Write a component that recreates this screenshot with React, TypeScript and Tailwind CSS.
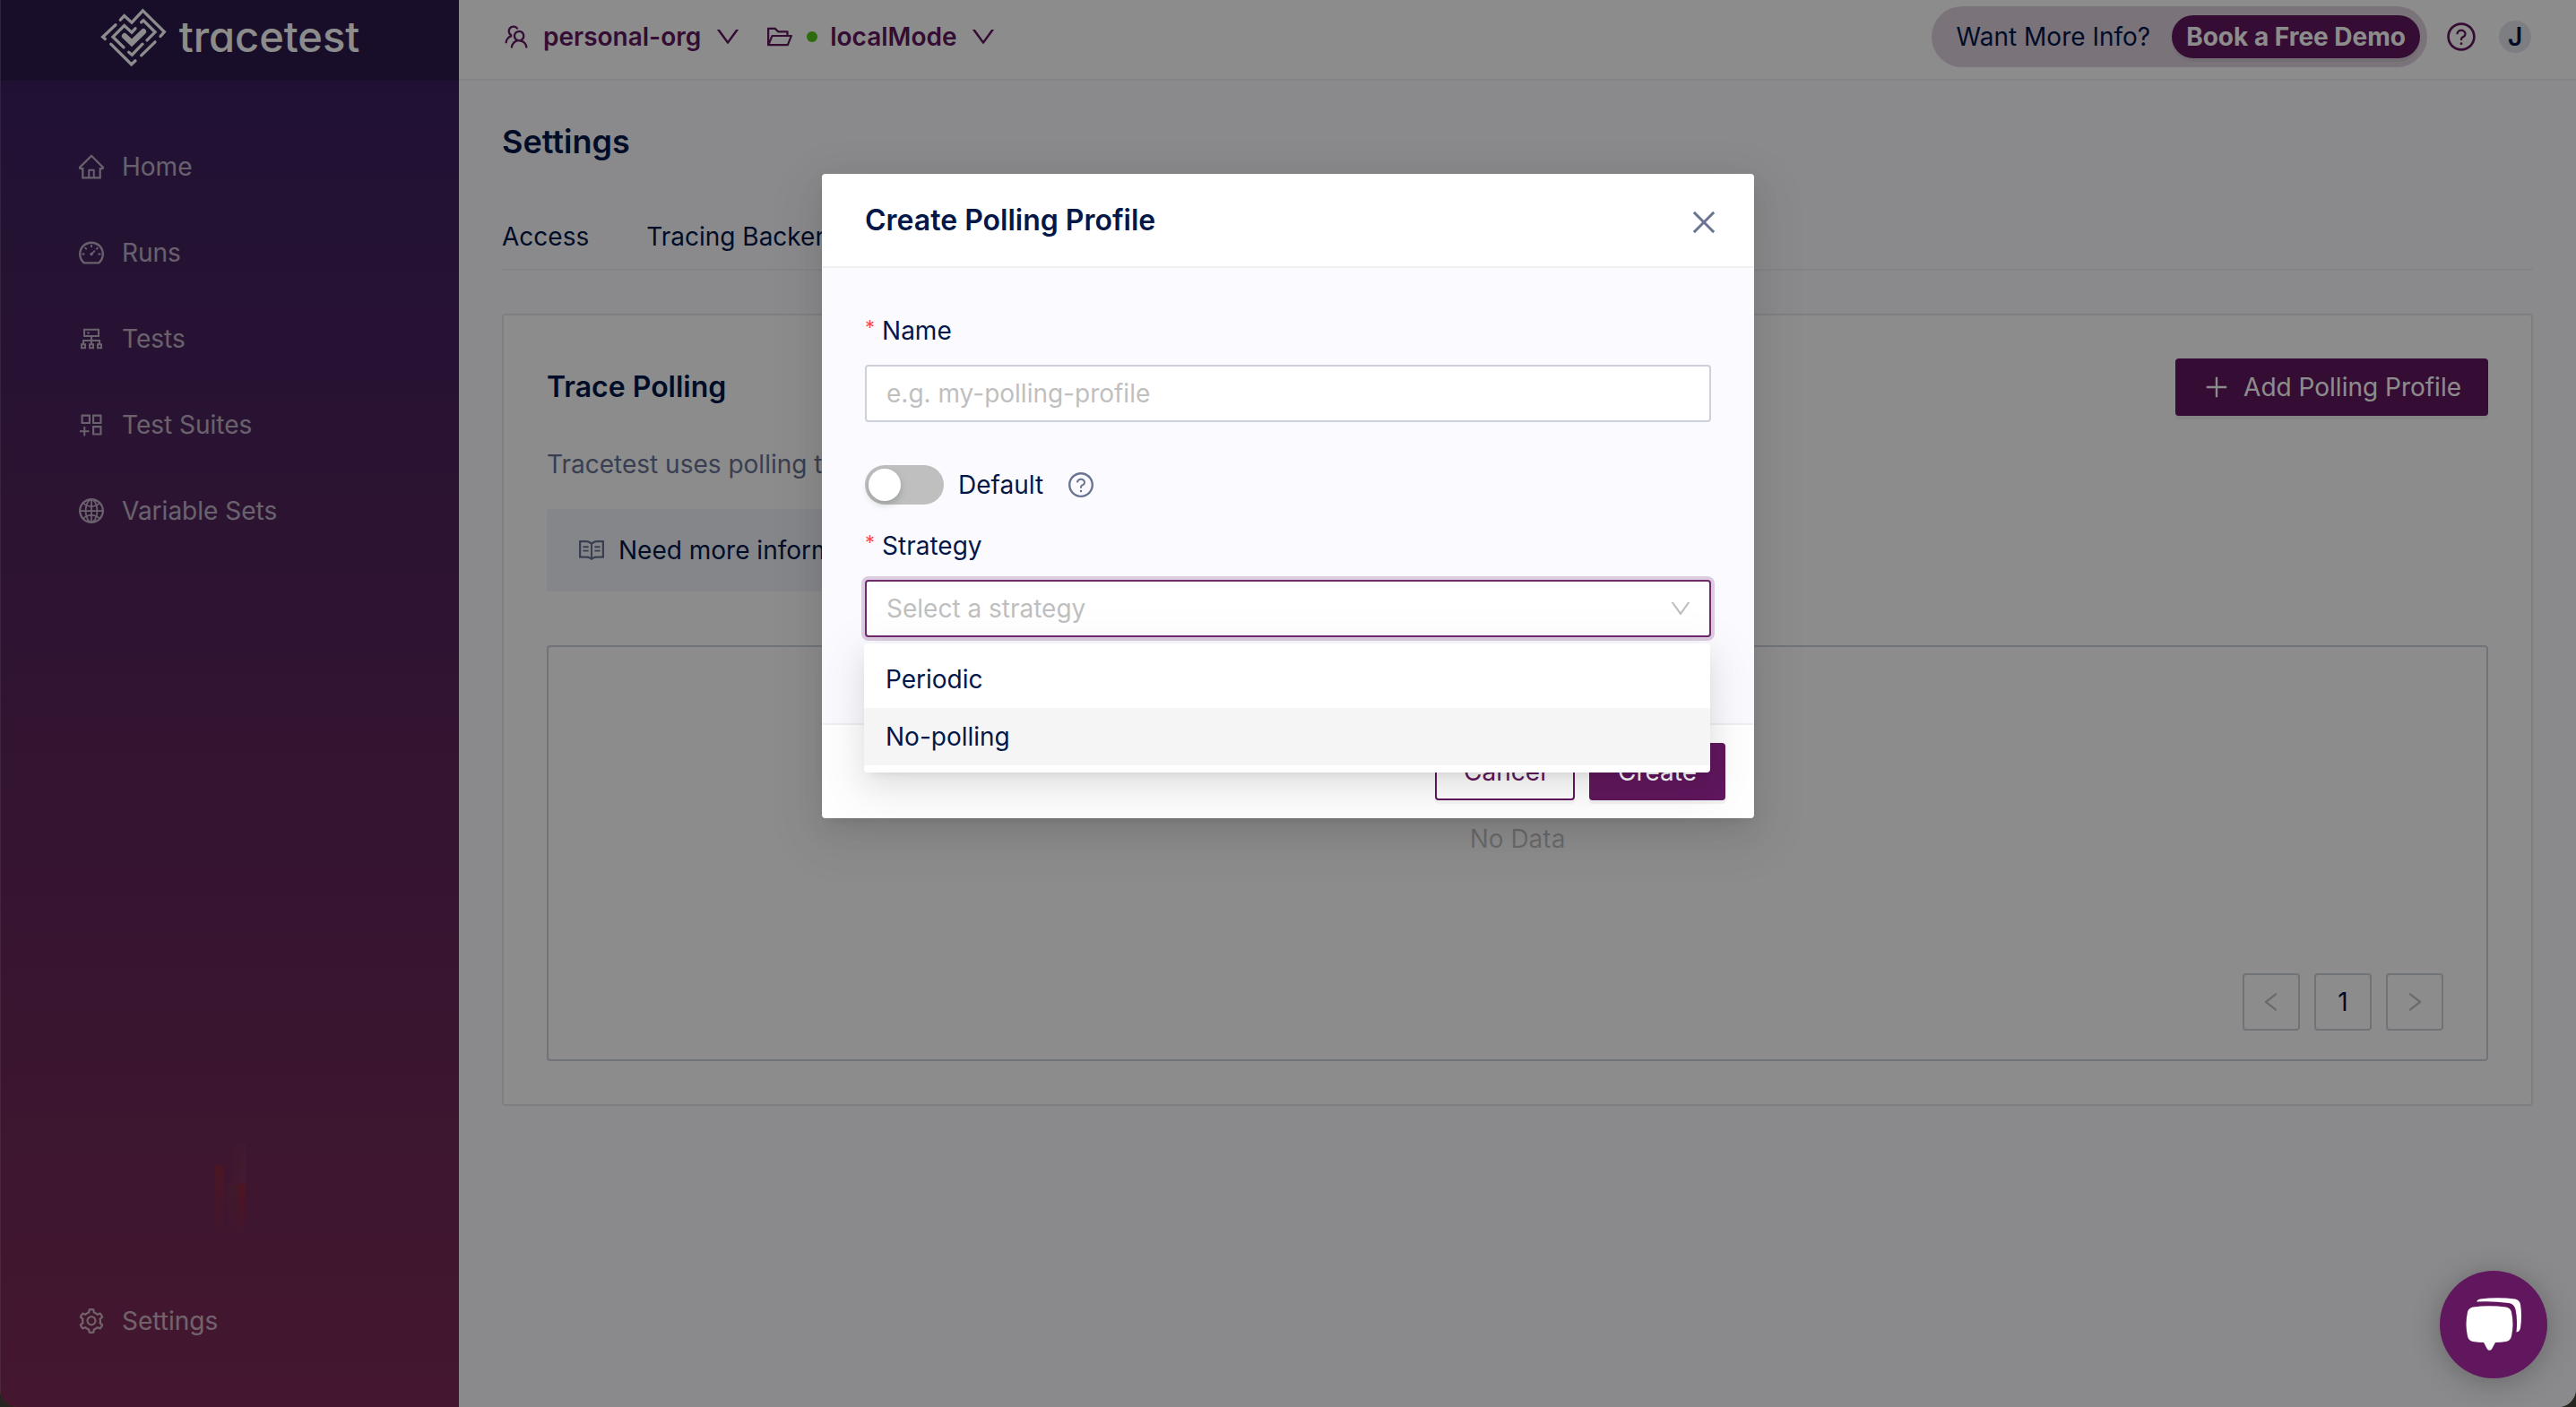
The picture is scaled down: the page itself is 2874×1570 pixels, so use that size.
import React from "react";
import {
  AiOutlineHome,
  AiOutlineDashboard,
  AiOutlineCluster,
  AiOutlineAppstoreAdd,
  AiOutlineGlobal,
  AiOutlineSetting,
  AiOutlineTeam,
  AiOutlineFolderOpen,
  AiOutlineDown,
  AiOutlineQuestionCircle,
  AiOutlineRead,
  AiOutlineLeft,
  AiOutlineRight,
  AiOutlineClose,
  AiOutlinePlus,
} from "react-icons/ai";

const navItems = [
  { label: "Home", Icon: AiOutlineHome },
  { label: "Runs", Icon: AiOutlineDashboard },
  { label: "Tests", Icon: AiOutlineCluster },
  { label: "Test Suites", Icon: AiOutlineAppstoreAdd },
  { label: "Variable Sets", Icon: AiOutlineGlobal },
];

const tabs = ["Access", "Tracing Backend", "Trace Polling", "Analyzer", "Test Runner", "Demo"];

function LogoMark() {
  return (
    <svg
      viewBox="30 22 222 200"
      className="h-[67px] w-[74px]"
      fill="none"
      stroke="white"
      strokeWidth="10"
      strokeLinecap="round"
      strokeLinejoin="miter"
      aria-hidden="true"
    >
      <path d="M97 64 L110 50 L135 73 L172 33 L244 104 L231 119" />
      <path d="M81 81 L38 121 L46 128" />
      <path d="M65 145 L134 213 L147 201" />
      <path d="M213 138 L167 183" />
      <path d="M108 156 L72 121 L110 83 L135 106 L147 93" />
      <path d="M167 72 L174 66 L213 105 L186 132" />
      <path d="M171 145 L136 181 L125 172" />
      <path d="M111 118 L135 141 L174 103" strokeWidth="19" />
    </svg>
  );
}

function SidebarGlow() {
  return (
    <div aria-hidden="true" className="flex h-[104px] items-end justify-center gap-1">
      <div className="h-20 w-[10px] bg-linear-to-b from-[#a02a2a]/50 to-transparent" />
      <div className="flex h-[103px] w-5 flex-col">
        <div className="h-11 bg-linear-to-r from-transparent to-[#a05050]/20" />
        <div className="flex flex-1">
          <div className="w-3 bg-linear-to-b from-[#8a4a2a]/20 to-transparent" />
          <div className="flex-1 bg-linear-to-b from-[#b02222]/50 to-transparent" />
        </div>
      </div>
    </div>
  );
}

function NavLink({ label, Icon }: { label: string; Icon: React.ComponentType<{ className?: string }> }) {
  return (
    <a href="#" className="flex h-20 items-center gap-[18px] pl-[85px] text-white/65">
      <Icon className="size-8" />
      {label}
    </a>
  );
}

function Sidebar() {
  return (
    <aside className="flex w-[512px] shrink-0 flex-col border-l border-white/15 bg-linear-[180deg,#2f1e61_-11%,#8b2c53_120%]">
      <div className="flex h-[90px] items-center justify-center gap-[14px] bg-[#2c1b4e] pb-2">
        <LogoMark />
        <span className="text-[47px] leading-[56px] font-medium text-white [font-feature-settings:'cv11']">tracetest</span>
      </div>
      <nav className="flex flex-col gap-4 pt-14">
        {navItems.map((item) => (
          <NavLink key={item.label} {...item} />
        ))}
      </nav>
      <div className="mt-auto pb-14">
        <SidebarGlow />
        <div className="pt-[54px]">
          <NavLink label="Settings" Icon={AiOutlineSetting} />
        </div>
      </div>
    </aside>
  );
}

function TopBar() {
  return (
    <header className="flex h-[90px] items-center justify-between border-b-2 border-[#f0f0f0] bg-white pr-[50px] pb-[6px] pl-12 text-[#61175e]">
      <div className="flex items-center font-semibold">
        <button className="flex items-center gap-[14px]">
          <AiOutlineTeam className="size-8" />
          personal-org
          <AiOutlineDown className="size-8" />
        </button>
        <button className="ml-[26px] flex items-center gap-[14px]">
          <AiOutlineFolderOpen className="size-8" />
          <span className="size-3 rounded-full bg-[#52c41a]" />
          localMode
          <AiOutlineDown className="size-8" />
        </button>
      </div>
      <div className="flex items-center">
        <div className="flex h-[68px] items-center gap-6 rounded-[34px] bg-[#dfd1df] pr-2 pl-7 text-[#031849]">
          Want More Info?
          <button className="h-12 rounded-3xl bg-[#61175e] px-4 font-bold text-white shadow-[0_4px_0_rgba(0,0,0,0.05)]">
            Book a Free Demo
          </button>
        </div>
        <button aria-label="Help" className="ml-5">
          <AiOutlineQuestionCircle className="size-9" />
        </button>
        <button className="ml-6 flex size-9 items-center justify-center rounded-full bg-[#e2e5ed] font-semibold text-[#031849]">J</button>
      </div>
    </header>
  );
}

function PageButton({ children, label }: { children: React.ReactNode; label: string }) {
  return (
    <button
      aria-label={label}
      className="flex size-16 items-center justify-center rounded-sm border-2 border-[#cdd1db] text-black/25"
    >
      {children}
    </button>
  );
}

function PollingCard() {
  return (
    <section className="mt-12 rounded-sm border-2 border-[#e6e7ea] bg-white p-12">
      <div className="flex items-center justify-between">
        <h2 className="text-[32px] leading-[44px] font-semibold">Trace Polling</h2>
        <button className="flex h-16 items-center gap-[14px] rounded-sm bg-[#61175e] px-[30px] text-white shadow-[0_4px_0_rgba(0,0,0,0.05)]">
          <AiOutlinePlus className="size-8" />
          Add Polling Profile
        </button>
      </div>
      <p className="mt-8 text-[#687492]">
        Tracetest uses polling to gather the distributed trace associated with each test run.
      </p>
      <div className="mt-7 flex h-[92px] w-fit items-center gap-[14px] rounded-sm bg-[#f2f4fb] px-[34px]">
        <AiOutlineRead className="size-8 text-[#687492]" />
        <span>Need more information about Trace Polling? Learn more about it in our docs</span>
      </div>
      <div className="mt-[60px] flex flex-col rounded-sm border-2 border-[#cdd1db] px-12 py-8">
        <div className="mt-40 flex justify-center text-black/25">No Data</div>
        <div className="mt-32 flex justify-end gap-4">
          <PageButton label="Previous page">
            <AiOutlineLeft className="size-7" />
          </PageButton>
          <PageButton label="Page 1">
            <span className="text-[#031849]">1</span>
          </PageButton>
          <PageButton label="Next page">
            <AiOutlineRight className="size-7" />
          </PageButton>
        </div>
      </div>
    </section>
  );
}

function SettingsPage() {
  return (
    <div className="flex-1 bg-[#fbfbff] px-12 pt-12">
      <h1 className="text-[36px] leading-10 font-semibold">Settings</h1>
      <div role="tablist" className="mt-12 flex gap-16 border-b-2 border-[#f0f0f0] pt-4 pb-[14px]">
        {tabs.map((tab) => (
          <button role="tab" key={tab}>
            {tab}
          </button>
        ))}
      </div>
      <PollingCard />
    </div>
  );
}

function FieldLabel({ htmlFor, children }: { htmlFor: string; children: React.ReactNode }) {
  return (
    <label htmlFor={htmlFor} className="mb-4 flex gap-2">
      <span className="text-[22px] leading-9 text-[#ff4d4f]">*</span>
      {children}
    </label>
  );
}

function StrategySelect() {
  return (
    <div className="relative">
      <button
        id="strategy"
        type="button"
        role="combobox"
        aria-expanded="true"
        aria-controls="strategy-options"
        className="flex h-16 w-full items-center justify-between rounded-sm border-2 border-[#702a6e] bg-white pr-[18px] pl-[22px] text-[#bfbfbf] ring-4 ring-[#61175e]/20"
      >
        Select a strategy
        <AiOutlineDown className="size-7" />
      </button>
      <ul
        id="strategy-options"
        role="listbox"
        className="absolute top-full right-px -left-px mt-[7px] rounded-sm bg-white py-2 shadow-[0_6px_12px_-8px_rgba(0,0,0,0.12),0_12px_32px_0_rgba(0,0,0,0.08),0_18px_56px_16px_rgba(0,0,0,0.05)]"
      >
        <li role="option" aria-selected="false" className="flex h-16 items-center px-6">
          Periodic
        </li>
        <li role="option" aria-selected="false" className="flex h-16 items-center bg-[#f5f5f5] px-6">
          No-polling
        </li>
      </ul>
    </div>
  );
}

function CreatePollingProfileDialog() {
  return (
    <form
      role="dialog"
      aria-labelledby="dialog-title"
      className="w-[1040px] rounded-sm bg-white shadow-[0_6px_12px_-8px_rgba(0,0,0,0.12),0_12px_32px_0_rgba(0,0,0,0.08),0_18px_56px_16px_rgba(0,0,0,0.05)]"
    >
      <div className="flex h-[105px] items-center justify-between border-b-2 border-[#f0f0f0] px-12">
        <h2 id="dialog-title" className="text-[32px] leading-[44px] font-semibold">
          Create Polling Profile
        </h2>
        <button type="button" aria-label="Close" className="-mr-[10px] pt-1 text-[#687492]">
          <AiOutlineClose className="size-9" />
        </button>
      </div>
      <div className="bg-[#fbfbff] p-12 pb-24">
        <FieldLabel htmlFor="name">Name</FieldLabel>
        <input
          id="name"
          type="text"
          placeholder="e.g. my-polling-profile"
          className="h-16 w-full rounded-sm border-2 border-[#cdd1db] bg-white px-[22px] placeholder:text-[#bfbfbf]"
        />
        <div className="mt-12 mb-6 flex items-center">
          <label className="flex items-center gap-4">
            <input type="checkbox" role="switch" className="peer sr-only" />
            <span className="flex h-11 w-[88px] items-center rounded-full bg-[#bfbfbf] p-1">
              <span className="size-9 rounded-full bg-white shadow-[0_4px_8px_rgba(0,35,11,0.2)]" />
            </span>
            Default
          </label>
          <AiOutlineQuestionCircle className="ml-[26px] size-8 text-[#687492]" />
        </div>
        <FieldLabel htmlFor="strategy">Strategy</FieldLabel>
        <StrategySelect />
      </div>
      <div className="flex justify-end gap-4 border-t-2 border-[#f0f0f0] px-8 py-5">
        <button
          type="button"
          className="h-16 rounded-sm border-2 border-[#61175e] px-[30px] text-[#61175e] shadow-[0_4px_0_rgba(0,0,0,0.03)]"
        >
          Cancel
        </button>
        <button type="submit" className="h-16 rounded-sm bg-[#61175e] px-8 text-white shadow-[0_4px_0_rgba(0,0,0,0.05)]">
          Create
        </button>
      </div>
    </form>
  );
}

function ChatBubble() {
  return (
    <button
      aria-label="Open chat"
      className="fixed right-8 bottom-8 flex size-[120px] items-center justify-center rounded-full bg-[#61175e] shadow-[0_4px_32px_rgba(0,0,0,0.25)]"
    >
      <svg viewBox="0 0 62 60" className="h-[60px] w-[62px]" fill="white" aria-hidden="true">
        <path d="M8 10.500 Q26 8 45 10.500 Q50 11.500 51 16 Q54 30 51 43 Q50 48 45 49 Q39 50 33 50 L29 57.500 Q26.500 60 24 57.500 L20 50 Q14 50 8 49 Q3 48 2 43 Q-1 30 2 16 Q3 11.500 8 10.500 Z" />
        <path d="M12 4.500 Q13 2 16 1.500 Q36 -1 55 1.500 Q60 2.500 61 7.500 Q63 20 61 34 Q60 38 56.500 38.500 Q58 24 55.500 13 Q54 7 48 6 Q30 3.500 12 4.500 Z" />
      </svg>
    </button>
  );
}

export default function App() {
  return (
    <div className="bg-[#26251f] font-['Inter',sans-serif] text-[28px] leading-[44px] text-[#031849]">
      <div className="relative flex min-h-screen overflow-hidden rounded-b-[20px]">
        <Sidebar />
        <main className="flex min-w-0 flex-1 flex-col">
          <TopBar />
          <SettingsPage />
        </main>
        <div className="absolute inset-0 flex items-start justify-center bg-black/45 pt-[194px]">
          <CreatePollingProfileDialog />
        </div>
        <ChatBubble />
      </div>
    </div>
  );
}
